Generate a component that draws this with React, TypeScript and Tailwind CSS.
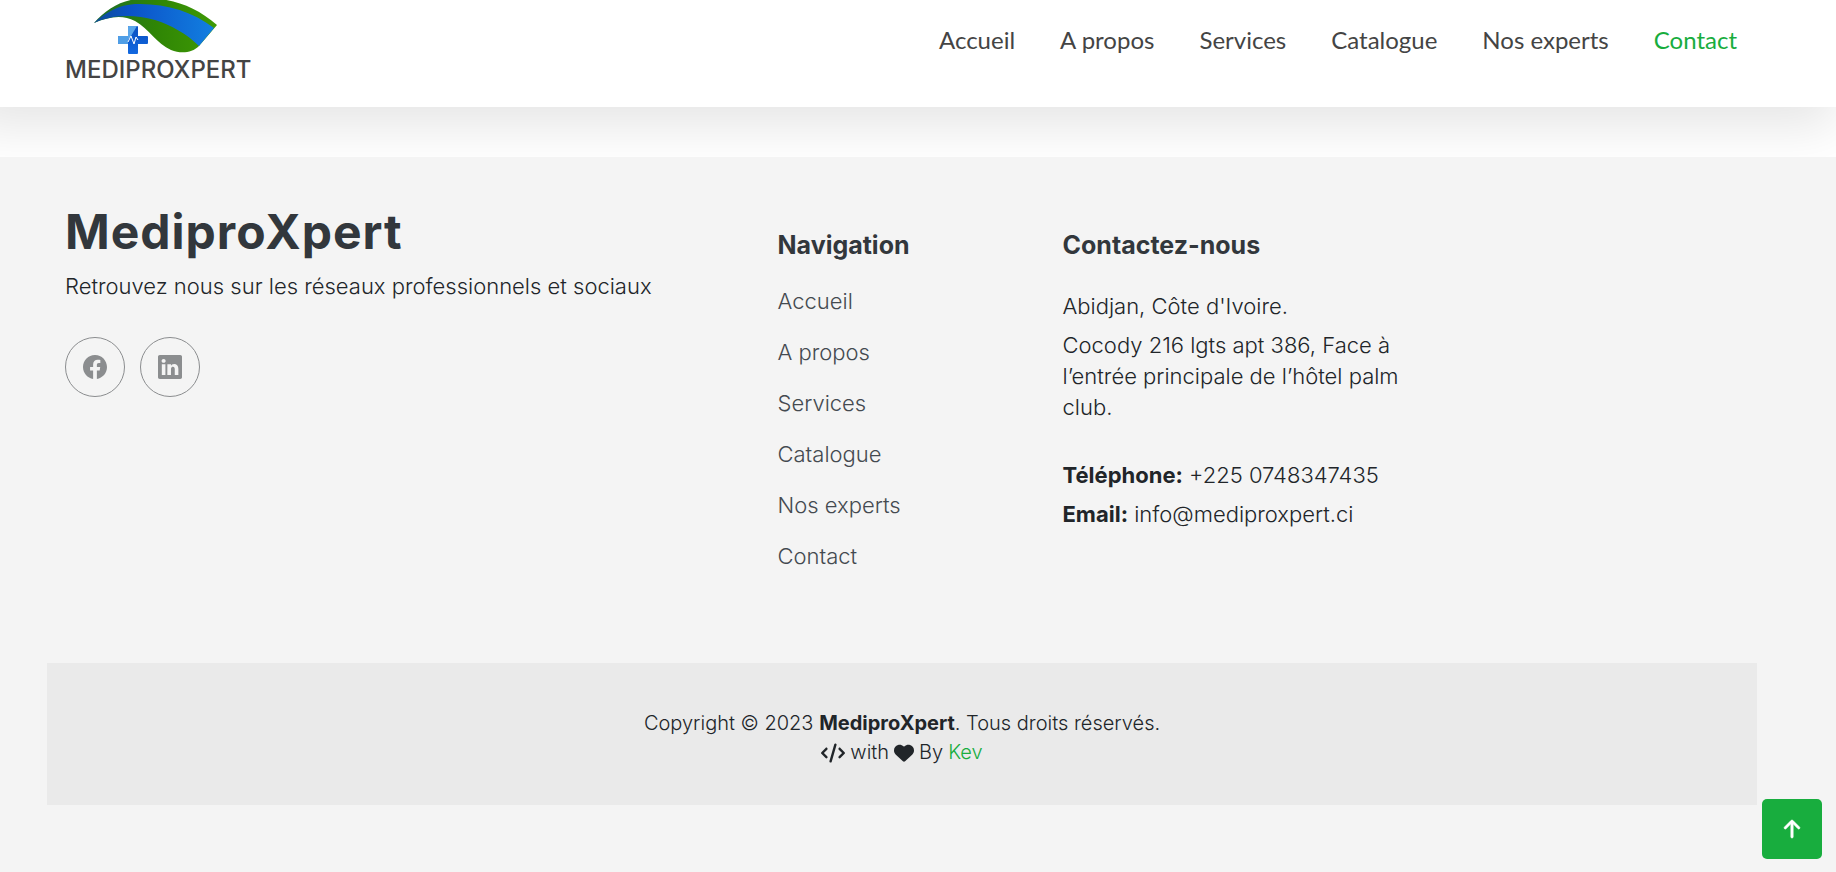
import { BsArrowUpShort, BsFacebook, BsLinkedin } from "react-icons/bs";
import { FaCode, FaHeart } from "react-icons/fa6";

const links = ["Accueil", "A propos", "Services", "Catalogue", "Nos experts", "Contact"];

function Logo() {
  return (
    <a href="#" className="flex flex-col text-[#444]">
      <svg viewBox="0 0 188 54" className="h-[54px] w-[188px]" aria-hidden="true">
        <defs>
          <linearGradient id="leaf" x1="0" x2="1">
            <stop offset="0" stopColor="#1c6b2c" />
            <stop offset="0.5" stopColor="#2f8505" />
            <stop offset="1" stopColor="#3f9a05" />
          </linearGradient>
          <linearGradient id="wave" x1="0" x2="1">
            <stop offset="0" stopColor="#0d4c94" />
            <stop offset="0.3" stopColor="#0b52c8" />
            <stop offset="1" stopColor="#127fe0" />
          </linearGradient>
          <linearGradient id="cross" x1="0" y1="0" x2="0" y2="1">
            <stop offset="0" stopColor="#0a4fc0" />
            <stop offset="1" stopColor="#1268e0" />
          </linearGradient>
        </defs>
        <path d="M29 23C40 10 56 0 73 -1C102 -4 129 5 152 25L134 46C127 53 116 54 106 50C92 44 84 29 70 21C57 14 43 17 29 23Z" fill="url(#leaf)" />
        <path d="M29 23C41 12 54 5 70 4C100 3 127 11 149 28L134 46C122 34 106 25 90 20C65 13 44 16 29 23Z" fill="url(#wave)" />
        <path d="M64 26h8q1 0 1 1v9h9q1 0 1 1v6q0 1 -1 1h-9v9q0 1 -1 1h-8q-1 0 -1 -1v-9h-9q-1 0 -1 -1v-6q0 -1 1 -1h9v-9q0 -1 1 -1Z" fill="url(#cross)" />
        <path d="M54 36h9v8h-9q-1 0 -1 -1v-6q0 -1 1 -1Z" fill="#4f9ee6" />
        <path d="M64 26h8L66 36L63 40V27q0 -1 1 -1Z" fill="#5aa6ea" />
        <path d="M63 42L66 36L69 44L71 37L73 40" fill="none" stroke="#fff" strokeWidth="1" />
      </svg>
      <span className="mt-1 text-2xl leading-6 font-medium">MEDIPROXPERT</span>
    </a>
  );
}

export default function App() {
  return (
    <div className="flex min-h-screen flex-col overflow-x-hidden bg-white font-['Inter',sans-serif] text-[#212529]">
      <header className="relative z-10 bg-white shadow-[-16px_4px_50px_16px_rgba(0,0,0,0.1)]">
        <div className="mr-8 flex h-[107px] items-start justify-between pr-[67px] pl-[65px]">
          <Logo />
          <nav className="flex gap-[45px] pt-[22px] font-['Lato',sans-serif] text-2xl leading-9 text-[#444]">
            {links.map((l) => (
              <a key={l} href="#" className={l === "Contact" ? "text-[#18ad3e]" : ""}>
                {l}
              </a>
            ))}
          </nav>
        </div>
      </header>

      <footer className="relative z-20 mt-[50px] flex-1 bg-[#f4f4f4] pr-8 text-[22px] font-light">
        <div className="mx-[47px]">
          <div className="grid grid-cols-12 pt-[51px]">
            <section className="col-span-5 px-[18px]">
              <h2 className="text-5xl leading-[48px] font-bold tracking-[1px] text-[#32373c]">MediproXpert</h2>
              <p className="mt-[14px] leading-8">Retrouvez nous sur les réseaux professionnels et sociaux</p>
              <div className="mt-[35px] flex gap-[15px] text-2xl text-[#8b8d8f]">
                <a href="#" aria-label="Facebook" className="flex size-[60px] items-center justify-center rounded-full border border-current">
                  <BsFacebook />
                </a>
                <a href="#" aria-label="LinkedIn" className="flex size-[60px] items-center justify-center rounded-full border border-current">
                  <BsLinkedin />
                </a>
              </div>
            </section>
            <nav className="col-span-2 px-[18px] pt-[23px]">
              <h3 className="text-[25px] leading-[29px] font-bold text-[#32373c]">Navigation</h3>
              <ul className="mt-4 text-[#444a50]">
                {links.map((l) => (
                  <li key={l} className="py-[10px] leading-[31px]">
                    <a href="#">{l}</a>
                  </li>
                ))}
              </ul>
            </nav>
            <section className="col-span-3 px-[18px] pt-[23px] leading-[31px]">
              <h3 className="text-[25px] leading-[29px] font-bold text-[#32373c]">Contactez-nous</h3>
              <p className="mt-[31px]">Abidjan, Côte d'Ivoire.</p>
              <p className="mt-2 max-w-[380px]">Cocody 216 lgts apt 386, Face à l’entrée principale de l’hôtel palm club.</p>
              <p className="mt-[37px]">
                <strong className="font-bold">Téléphone:</strong> +225 0748347435
              </p>
              <p className="mt-2">
                <strong className="font-bold">Email:</strong> info@mediproxpert.ci
              </p>
            </section>
          </div>
          <div className="mt-[81px] bg-[#eaeaea] pt-[46px] pb-[38px] text-center text-xl leading-[29px]">
            <p>
              Copyright © 2023 <strong className="font-bold">MediproXpert</strong>. Tous droits réservés.
            </p>
            <p className="flex items-center justify-center gap-[5px]">
              <FaCode className="size-6" /> with <FaHeart className="size-5" /> By{" "}
              <a href="#" className="text-[#18ad3e]">Kev</a>
            </p>
          </div>
        </div>
      </footer>

      <button type="button" aria-label="Haut de page" className="fixed right-[14px] bottom-[13px] z-30 flex size-[60px] items-center justify-center rounded-[5px] bg-[#18ad3e] text-white">
        <BsArrowUpShort className="size-9 stroke-current [stroke-width:0.3px]" />
      </button>
    </div>
  );
}
